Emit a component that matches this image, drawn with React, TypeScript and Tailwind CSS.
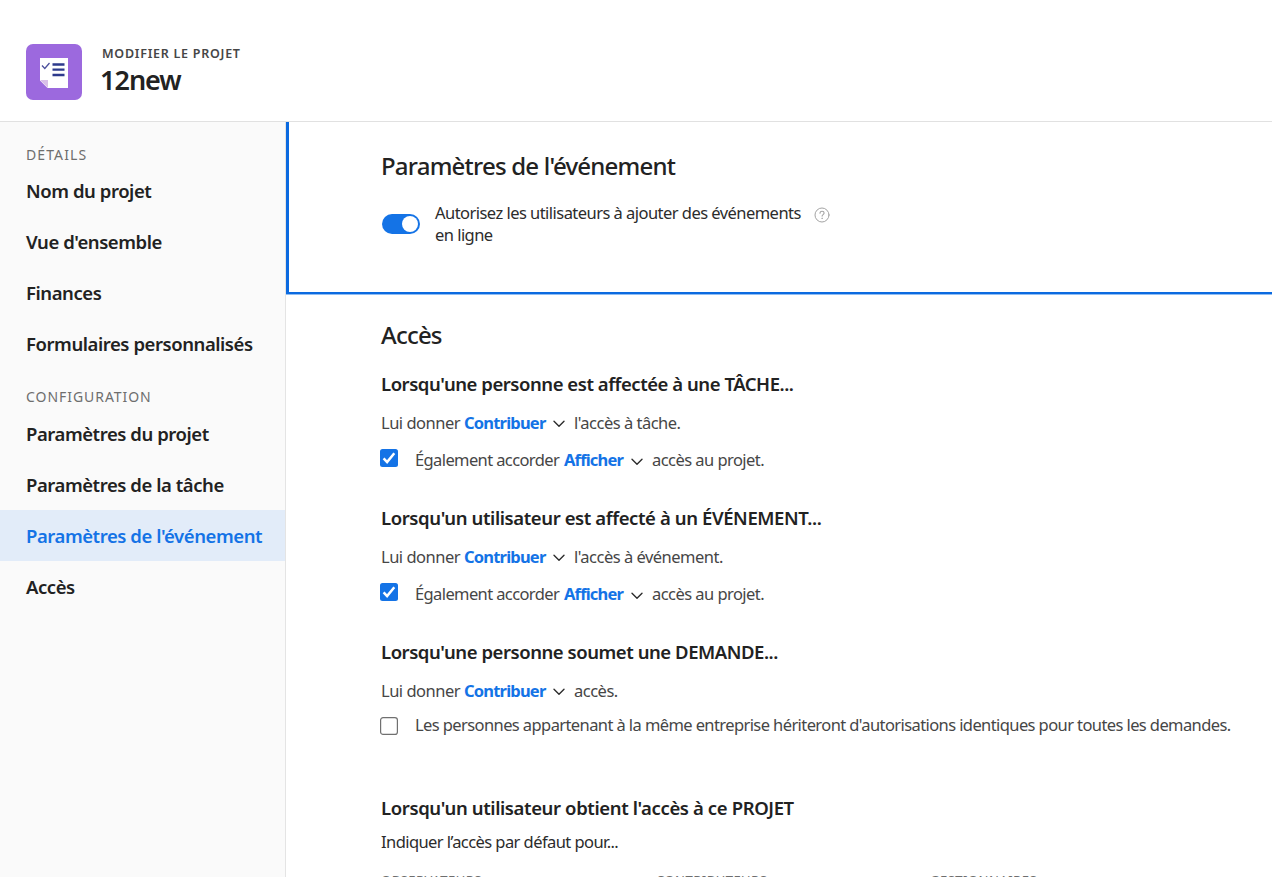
import type { ReactNode } from "react";

function ProjectIcon() {
  return (
    <svg className="h-14 w-14 shrink-0" viewBox="0 0 56 56">
      <rect width="56" height="56" rx="7" fill="#9c69de" />
      <path d="M14 14h28v30H21.5L14 36.5z" fill="#fff" />
      <path d="M14 36h8v8z" fill="#d9bfe8" />
      <path d="M16 21.5l2.8 3L23.500 19" fill="none" stroke="#4b4f9c" strokeWidth="1.3" />
      <path d="M26.500 20.500h12M26.500 25.700h12M26.500 31h12" stroke="#2d3a8c" strokeWidth="2.300" />
    </svg>
  );
}

function Chevron({ className }: { className: string }) {
  return (
    <svg className={className} width="12" height="8" viewBox="0 0 12 8" fill="none" stroke="#2c2c2c" strokeWidth="1.4" strokeLinecap="round" strokeLinejoin="round">
      <path d="M1 1.200l5 5 5-5" />
    </svg>
  );
}

function HelpIcon() {
  return (
    <svg width="16" height="16" viewBox="0 0 16 16" fill="none" stroke="#a3a3a3" strokeLinecap="round">
      <circle cx="8" cy="8" r="7" strokeWidth="1" />
      <path d="M6 6.300c0-1.300.9-2 2.100-2s2 .7 2 1.800c0 1.500-2 1.500-2 3" strokeWidth="1.100" />
      <circle cx="8.050" cy="11.300" r=".35" strokeWidth=".7" />
    </svg>
  );
}

function Checkbox({ checked }: { checked?: boolean }) {
  return (
    <svg className="shrink-0" width="18" height="18" viewBox="0 0 18 18">
      {checked ? (
        <>
          <rect width="18" height="18" rx="2.500" fill="#1473e6" />
          <path d="M3.600 9.400l3.500 3.700L14.300 4.200" fill="none" stroke="#fff" strokeWidth="2.500" />
        </>
      ) : (
        <rect x=".6" y=".6" width="16.800" height="16.800" rx="2.500" fill="#fff" stroke="#707070" strokeWidth="1.200" />
      )}
    </svg>
  );
}

function NavLabel({ children, className }: { children: ReactNode; className: string }) {
  return <div className={`pl-[26px] text-[14px] leading-[20px] text-[#6e6e6e] ${className}`}>{children}</div>;
}

function NavItem({ children, active }: { children: ReactNode; active?: boolean }) {
  return (
    <a className={`flex h-[51px] items-center whitespace-nowrap pl-[26px] pt-px text-[18.5px] font-semibold tracking-[-0.44px] ${active ? "bg-[#e2ecf9] text-[#1473e6]" : "text-[#222]"}`}>
      {children}
    </a>
  );
}

function GroupTitle({ children, className }: { children: ReactNode; className: string }) {
  return <h3 className={`h-[26px] whitespace-nowrap text-[18.5px] font-semibold leading-[26px] text-[#222] ${className}`}>{children}</h3>;
}

function GrantLine({ suffix }: { suffix: string }) {
  return (
    <div className="mt-[14px] flex h-6 items-center whitespace-nowrap text-[16.5px] leading-6 tracking-[-0.5px] text-[#464646]">
      <span className="w-[83px]">Lui donner</span>
      <span className="w-[89px] font-bold tracking-[-0.8px] text-[#1473e6]">Contribuer</span>
      <Chevron className="mt-[2px]" />
      <span className="ml-[9px]">{suffix}</span>
    </div>
  );
}

function ProjectLine() {
  return (
    <div className="mt-[13px] flex h-6 items-center whitespace-nowrap text-[16.5px] leading-6 tracking-[-0.55px] text-[#464646]">
      <span className="-ml-px mr-[17px] -mt-[5px] flex"><Checkbox checked /></span>
      <span className="w-[149px] tracking-[-0.61px]">Également accorder</span>
      <span className="w-[67px] font-bold tracking-[-0.82px] text-[#1473e6]">Afficher</span>
      <Chevron className="mt-[4px]" />
      <span className="ml-[9px]">accès au projet.</span>
    </div>
  );
}

export default function App() {
  return (
    <div className="flex h-[877px] w-[1272px] flex-col overflow-hidden bg-white font-['Noto_Sans',sans-serif] text-[#222]">
      <header className="flex h-[122px] shrink-0 border-b border-[#e1e1e1] pl-[26px] pt-[44px]">
        <ProjectIcon />
        <div className="ml-5">
          <div className="text-[12.5px] font-semibold leading-[20px] tracking-[0.74px] text-[#464646]">MODIFIER LE PROJET</div>
          <h1 className="-ml-0.5 text-[27px] font-semibold leading-[32px] tracking-[-1px]">12new</h1>
        </div>
      </header>

      <div className="flex min-h-0 flex-1">
        <nav className="w-[286px] shrink-0 border-r border-[#e4e4e4] bg-[#fafafa] pt-[23px]">
          <NavLabel className="tracking-[1.1px]">DÉTAILS</NavLabel>
          <NavItem>Nom du projet</NavItem>
          <NavItem>Vue d'ensemble</NavItem>
          <NavItem>Finances</NavItem>
          <NavItem>Formulaires personnalisés</NavItem>
          <NavLabel className="mb-px mt-[18px] tracking-[0.95px]">CONFIGURATION</NavLabel>
          <NavItem>Paramètres du projet</NavItem>
          <NavItem>Paramètres de la tâche</NavItem>
          <NavItem active>Paramètres de l'événement</NavItem>
          <NavItem>Accès</NavItem>
        </nav>

        <main className="min-w-0 flex-1">
          <section className="h-[172px] border-b-2 border-l-[3px] border-[#0b6ae0] pl-[92px] pt-[28px] shadow-[0_1px_0_#8fbdf3]">
            <h2 className="h-[32px] whitespace-nowrap text-[24px] font-medium leading-[32px] tracking-[-0.78px]">Paramètres de l'événement</h2>
            <div className="mt-[20px] flex">
              <div className="mt-[12px] ml-px flex h-[20px] w-[38px] items-center justify-end rounded-full bg-[#1473e6] pr-[2px]">
                <span className="h-4 w-4 rounded-full bg-white" />
              </div>
              <p className="ml-[15px] w-[379px] text-[16.5px] leading-[22px] tracking-[-0.54px] text-[#2c2c2c]">
                Autorisez les utilisateurs à ajouter des événements<br />en ligne
              </p>
              <div className="mt-[5px]"><HelpIcon /></div>
            </div>
          </section>

          <section className="pl-[95px] pt-[25px]">
            <h2 className="h-[32px] text-[24px] font-medium leading-[32px] tracking-[-0.8px]">Accès</h2>
            <div className="mt-[20px] h-[134px]">
              <GroupTitle className="tracking-[-0.46px]">Lorsqu'une personne est affectée à une TÂCHE...</GroupTitle>
              <GrantLine suffix="l'accès à tâche." />
              <ProjectLine />
            </div>
            <div className="h-[134px]">
              <GroupTitle className="tracking-[-0.4px]">Lorsqu'un utilisateur est affecté à un ÉVÉNEMENT...</GroupTitle>
              <GrantLine suffix="l'accès à événement." />
              <ProjectLine />
            </div>
            <div className="h-[156px]">
              <GroupTitle className="tracking-[-0.45px]">Lorsqu'une personne soumet une DEMANDE...</GroupTitle>
              <GrantLine suffix="accès." />
              <div className="mt-[10px] flex h-6 items-center whitespace-nowrap text-[16.5px] leading-6 tracking-[-0.595px] text-[#464646]">
                <span className="-ml-px mr-[17px] mt-[2px] flex"><Checkbox /></span>
                Les personnes appartenant à la même entreprise hériteront d'autorisations identiques pour toutes les demandes.
              </div>
            </div>
            <GroupTitle className="tracking-[-0.38px]">Lorsqu'un utilisateur obtient l'accès à ce PROJET</GroupTitle>
            <p className="mt-[9px] h-6 text-[16.5px] leading-6 tracking-[-0.57px] text-[#2c2c2c]">Indiquer l’accès par défaut pour...</p>
            <div className="mt-[16px] flex text-[13px] leading-[20px] tracking-[0.5px] text-[#6e6e6e]">
              <span className="w-[275px]">OBSERVATEURS</span>
              <span className="w-[274px]">CONTRIBUTEURS</span>
              <span>GESTIONNAIRES</span>
            </div>
          </section>
        </main>
      </div>
    </div>
  );
}
